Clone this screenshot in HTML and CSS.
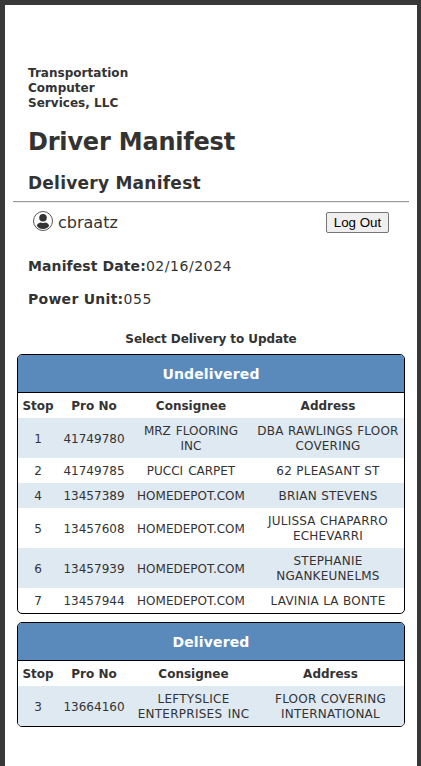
FILE: index.html
```
<!DOCTYPE html>
<html lang="en">
<head>
<meta charset="utf-8">
<title>Driver Manifest</title>
<link rel="stylesheet" href="styles.css">
</head>
<body>
<main class="page">
  <header class="header">
    <p class="company">Transportation<br>Computer<br>Services, LLC</p>
    <h1 class="title">Driver Manifest</h1>
    <h2 class="subtitle">Delivery Manifest</h2>
  </header>
  <hr class="rule">
  <div class="userbar">
    <svg class="avatar" viewBox="0 0 20 20"><circle cx="10" cy="10" r="9.5" fill="#fff" stroke="#444" stroke-width="0.9"/><circle cx="10" cy="6.8" r="3.8" fill="#333"/><path d="M3.8 14.8C4.6 12.4 6.5 11.4 8 11.4Q10 12.4 12 11.4C13.5 11.4 15.4 12.4 16.2 14.8C14.8 17 12.5 18 10 18S5.2 17 3.8 14.8Z" fill="#333"/></svg>
    <span class="username">cbraatz</span>
    <button class="logout" type="button">Log Out</button>
  </div>
  <section class="details">
    <p class="date"><b>Manifest Date:</b><span>02/16/2024</span></p>
    <p class="unit"><b>Power Unit:</b><span>055</span></p>
  </section>
  <h4 class="prompt">Select Delivery to Update</h4>
  <section class="card undelivered">
    <h3>Undelivered</h3>
    <div class="row head"><b>Stop</b><b>Pro No</b><b>Consignee</b><b>Address</b></div>
    <div class="row tall"><span>1</span><span>41749780</span><span>MRZ FLOORING<br>INC</span><span>DBA RAWLINGS FLOOR<br>COVERING</span></div>
    <div class="row"><span>2</span><span>41749785</span><span>PUCCI CARPET</span><span>62 PLEASANT ST</span></div>
    <div class="row"><span>4</span><span>13457389</span><span>HOMEDEPOT.COM</span><span>BRIAN STEVENS</span></div>
    <div class="row tall"><span>5</span><span>13457608</span><span>HOMEDEPOT.COM</span><span>JULISSA CHAPARRO<br>ECHEVARRI</span></div>
    <div class="row tall"><span>6</span><span>13457939</span><span>HOMEDEPOT.COM</span><span>STEPHANIE<br>NGANKEUNELMS</span></div>
    <div class="row"><span>7</span><span>13457944</span><span>HOMEDEPOT.COM</span><span>LAVINIA LA BONTE</span></div>
  </section>
  <section class="card delivered">
    <h3>Delivered</h3>
    <div class="row head"><b>Stop</b><b>Pro No</b><b>Consignee</b><b>Address</b></div>
    <div class="row tall"><span>3</span><span>13664160</span><span>LEFTYSLICE<br>ENTERPRISES INC</span><span>FLOOR COVERING<br>INTERNATIONAL</span></div>
  </section>
</main>
</body>
</html>
```
FILE: styles.css
```
* { box-sizing: border-box; }
html { background: #383838; }
body {
  margin: 0;
  padding: 5px 4px 0 5px;
  height: 766px;
  overflow: hidden;
  color: #333;
  font-family: Verdana, "DejaVu Sans", sans-serif;
}
h1, h2, h3, h4, p { margin: 0; }
.page { height: 761px; padding: 61px 8px 0; background: #fff; }
.header { padding-left: 15px; white-space: nowrap; }
.company { font-size: 12px; line-height: 15px; font-weight: bold; letter-spacing: 0.03px; }
.title { margin-top: 15px; font-size: 24px; line-height: 32px; letter-spacing: -0.2px; }
.subtitle { margin-top: 14px; font-size: 17px; line-height: 22px; letter-spacing: 0.24px; }
.rule { height: 2px; margin: 7px 0 0; border: 0; border-top: 1px solid #999; border-bottom: 1px solid #eee; }
.userbar { display: flex; align-items: center; height: 39px; padding: 0 20px; }
.avatar { width: 20px; height: 20px; margin-bottom: 3px; }
.username { margin-left: 5px; font-size: 16px; }
.logout {
  margin-left: auto;
  width: 63px;
  height: 21px;
  padding: 0;
  border: 1px solid #767676;
  border-radius: 2px;
  background: #efefef;
  color: #000;
  font: 13.333px/19px "Liberation Sans", Arial, sans-serif;
}
.details { padding: 8px 0 0 15px; font-size: 14px; }
.details p { height: 33px; line-height: 33px; }
.details span { letter-spacing: 0.55px; }
.date b { letter-spacing: 0.1px; }
.unit b { letter-spacing: 0.27px; }
.prompt { margin-top: 16px; height: 15px; font-size: 12px; line-height: 15px; letter-spacing: -0.08px; text-align: center; }
.card {
  width: 388px;
  margin: 8px 0 0 4px;
  overflow: hidden;
  border: 1px solid #000;
  border-radius: 5px;
  font-size: 12px;
  line-height: 15px;
}
.prompt + .card { margin-top: 7px; }
.card h3 {
  height: 38px;
  border-bottom: 1px solid #000;
  background: #5a8abc;
  color: #fff;
  font-size: 14px;
  line-height: 39px;
  letter-spacing: 0.15px;
  text-align: center;
}
.row {
  display: grid;
  grid-template-columns: 40px 72px 122px 152px;
  align-items: center;
  height: 25px;
  padding-top: 2px;
  text-align: center;
  white-space: nowrap;
}
.delivered .row { grid-template-columns: 40px 72px 127px 147px; }
.row.tall { height: 40px; }
.row:nth-child(odd) { background: #dfe9f2; }
.row span:nth-child(3) { word-spacing: 1.2px; }
.row span:nth-child(4) { letter-spacing: 0.2px; word-spacing: 0.3px; }
.delivered .row span:nth-child(3) { letter-spacing: 0.27px; }
```
